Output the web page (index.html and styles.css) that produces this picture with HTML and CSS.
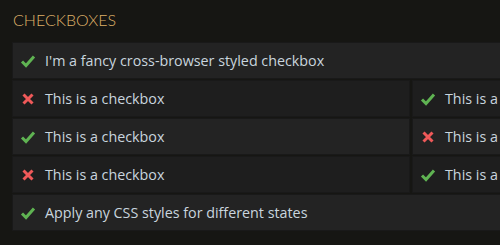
FILE: index.html
```html
<!DOCTYPE html>
<html lang="en">
<head>
  <meta charset="UTF-8" />
  <title>Checkboxes</title>
  <link rel="stylesheet" href="styles.css">
</head>
<body>
  <h2 class="title">Checkboxes</h2>
  <div class="list">
    <div class="item light">
      <svg class="icon" viewBox="0 0 16 14"><path class="yes" d="M2 7.5l4 4 8-9" /></svg>
      <span>I'm a fancy cross-browser styled checkbox</span>
    </div>
    <div class="pair">
      <div class="item">
        <svg class="icon" viewBox="0 0 16 14"><path class="no" d="M3.5 2.5l9 9M12.5 2.5l-9 9" /></svg>
        <span>This is a checkbox</span>
      </div>
      <div class="item">
        <svg class="icon" viewBox="0 0 16 14"><path class="yes" d="M2 7.5l4 4 8-9" /></svg>
        <span>This is a checkbox</span>
      </div>
    </div>
    <div class="pair">
      <div class="item light">
        <svg class="icon" viewBox="0 0 16 14"><path class="yes" d="M2 7.5l4 4 8-9" /></svg>
        <span>This is a checkbox</span>
      </div>
      <div class="item light">
        <svg class="icon" viewBox="0 0 16 14"><path class="no" d="M3.5 2.5l9 9M12.5 2.5l-9 9" /></svg>
        <span>This is a checkbox</span>
      </div>
    </div>
    <div class="pair">
      <div class="item">
        <svg class="icon" viewBox="0 0 16 14"><path class="no" d="M3.5 2.5l9 9M12.5 2.5l-9 9" /></svg>
        <span>This is a checkbox</span>
      </div>
      <div class="item">
        <svg class="icon" viewBox="0 0 16 14"><path class="yes" d="M2 7.5l4 4 8-9" /></svg>
        <span>This is a checkbox</span>
      </div>
    </div>
    <div class="item light">
      <svg class="icon" viewBox="0 0 16 14"><path class="yes" d="M2 7.5l4 4 8-9" /></svg>
      <span>Apply any CSS styles for different states</span>
    </div>
  </div>
</body>
</html>
```

FILE: styles.css
```css
html, body {
  overflow: hidden;
}
body {
  margin: 0;
  padding: 10px 12px;
  background-color: #161613;
  font-family: "Open Sans", Arial, sans-serif;
  color: #c9d5de;
}
.title {
  margin: 0 0 12px 1px;
  font-family: Lato, "Liberation Sans", sans-serif;
  font-weight: 300;
  font-size: 16px;
  line-height: 20px;
  text-transform: uppercase;
  color: #dfb068;
}
.list {
  display: flex;
  flex-direction: column;
  gap: 1px;
  width: 798px;
}
.pair {
  display: grid;
  grid-template-columns: 1fr 1fr;
  gap: 2px;
}
.item {
  display: flex;
  align-items: center;
  gap: 9px;
  height: 35px;
  padding: 0 7px;
  background-color: #1e1e1e;
  border: 1px solid #191919;
  font-size: 14.3px;
  white-space: nowrap;
}
.item.light {
  background-color: #232323;
}
.icon {
  width: 16px;
  height: 14px;
  flex: none;
}
.icon path {
  fill: none;
  stroke-width: 3;
}
.yes {
  stroke: #5fb352;
}
.no {
  stroke: #ef5959;
}
```
